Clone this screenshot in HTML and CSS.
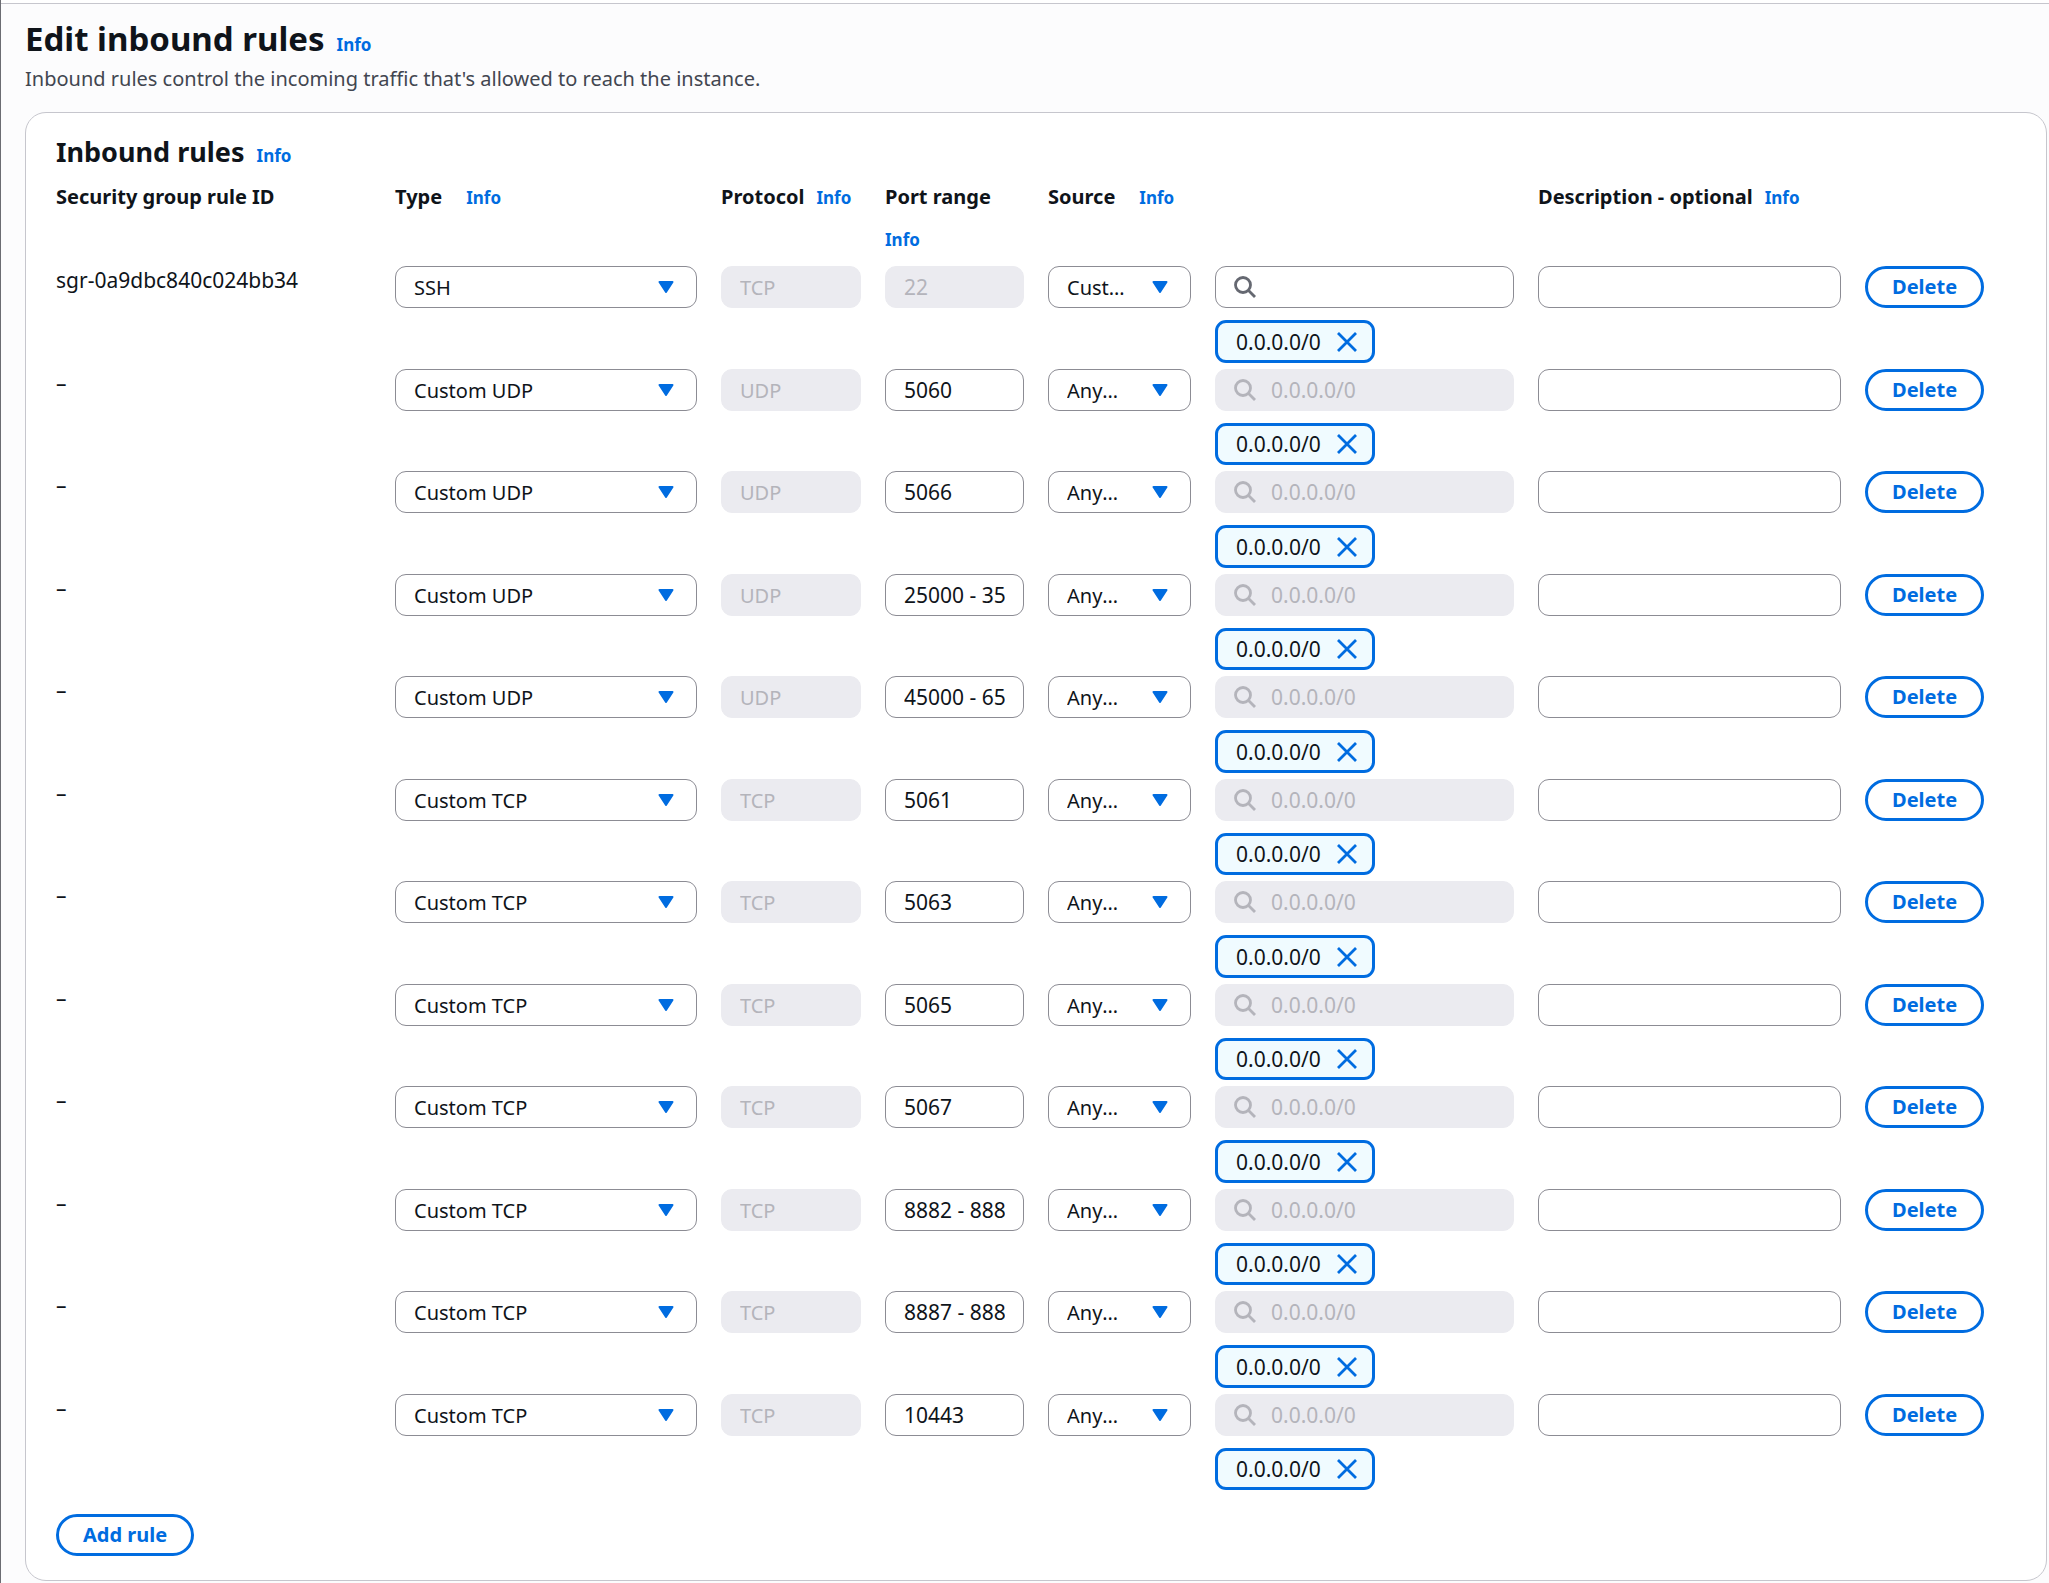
FILE: index.html
```html
<!DOCTYPE html>
<html lang="en">
<head>
<meta charset="utf-8">
<meta name="viewport" content="width=device-width, initial-scale=1">
<title>Edit inbound rules</title>
<link rel="stylesheet" href="styles.css">
</head>
<body>
<svg class="sprite" aria-hidden="true">
  <symbol id="caret" viewBox="0 0 16 12"><path d="M1.5 1h13L8 11z" fill="currentColor" stroke="currentColor" stroke-width="2" stroke-linejoin="round"/></symbol>
  <symbol id="search" viewBox="0 0 22 22"><g fill="none" stroke="currentColor" stroke-width="2.8"><circle cx="9" cy="9" r="7.5"/><path d="M14.3 14.3l6.7 6.7"/></g></symbol>
  <symbol id="close" viewBox="0 0 20 20"><path d="M1 1l18 18M19 1L1 19" fill="none" stroke="currentColor" stroke-width="2.8"/></symbol>
</svg>
<div class="topbar"></div>
<main class="page">
  <header class="page-header">
    <div class="title-row"><h1>Edit inbound rules</h1><a class="info" href="#info">Info</a></div>
    <p>Inbound rules control the incoming traffic that's allowed to reach the instance.</p>
  </header>
  <section class="card">
    <div class="title-row"><h2>Inbound rules</h2><a class="info" href="#info">Info</a></div>
    <table class="rules">
      <thead>
        <tr class="rule-grid">
          <th scope="col"><span>Security group rule ID</span></th>
          <th scope="col" class="wide"><span>Type</span><a class="info" href="#type">Info</a></th>
          <th scope="col"><span>Protocol</span><a class="info" href="#protocol">Info</a></th>
          <th scope="col"><span>Port range</span><a class="info" href="#port">Info</a></th>
          <th scope="col" class="wide"><span>Source</span><a class="info" href="#source">Info</a></th>
          <td></td>
          <th scope="col"><span>Description - optional</span><a class="info" href="#description">Info</a></th>
          <td></td>
        </tr>
      </thead>
      <tbody id="rules"></tbody>
    </table>
    <button class="btn" type="button">Add rule</button>
  </section>
</main>
<script src="rules.js"></script>
</body>
</html>
```
FILE: styles.css
```css
* { box-sizing: border-box; }

body {
  margin: 0;
  min-height: 100vh;
  border-left: 1px solid #6b6c72;
  background: #fcfcfd;
  color: #0f141a;
  font: 20px/28px "Noto Sans", "Open Sans", sans-serif;
}

h1, h2, p { margin: 0; }
h1 { font-size: 33px; line-height: 40px; }
h2 { font-size: 27px; line-height: 32px; }

.sprite { display: none; }

.topbar {
  height: 4px;
  border-bottom: 1px solid #c6c6cd;
  background: #fff;
}

.page { padding: 15px 2px 2px 24px; }
.page-header { margin-bottom: 19px; }
.page-header p { margin-top: 6px; color: #424650; }

.title-row {
  display: flex;
  align-items: baseline;
  gap: 12px;
}

.info {
  color: #006ce0;
  font-size: 17px;
  font-weight: 700;
  line-height: 20px;
  text-decoration: none;
}

.card {
  padding: 23px 30px 24px;
  border: 1px solid #c6c6cd;
  border-radius: 21px;
  background: #fff;
}

.rules {
  display: block;
  margin: 8px 0 18px;
}
.rules thead, .rules tbody { display: block; }

.rule-grid {
  display: grid;
  grid-template-columns:
    minmax(0, 315fr) minmax(0, 302fr) minmax(0, 140fr) minmax(0, 139fr)
    minmax(0, 143fr) minmax(0, 299fr) minmax(0, 303fr) minmax(0, 151fr);
  column-gap: 24px;
}

.rules th, .rules td { padding: 0; text-align: left; }
.rules th {
  display: flex;
  flex-wrap: wrap;
  align-content: flex-start;
  align-items: baseline;
  gap: 12px;
  line-height: 42px;
}
.rules th.wide { column-gap: 24px; }
.rules thead { padding-bottom: 16px; }
.rules tbody .rule-grid { padding-bottom: 6px; }

.rule-id, .port, .search input, .token { font-size: 21px; }

.field, .select select {
  display: block;
  width: 100%;
  height: 42px;
  padding: 0 18px;
  border: 1px solid #8c8c94;
  border-radius: 11px;
  background: #fff;
  color: #0f141a;
  font-family: inherit;
  font-size: 20px;
}
.field.port { font-size: 21px; }
.field:disabled {
  border-color: #ebebf0;
  background: #ebebf0;
  color: #b4b4bb;
}
.field::placeholder { color: #b4b4bb; }

.select, .search { display: grid; align-items: center; }
.select > *, .search > * { grid-area: 1 / 1; }
.select select {
  appearance: none;
  padding-right: 60px;
  overflow: hidden;
  text-overflow: ellipsis;
  white-space: nowrap;
}
.select svg {
  width: 16px;
  height: 12px;
  margin-right: 23px;
  justify-self: end;
  color: #006ce0;
  pointer-events: none;
}

.search input { padding-left: 55px; font-size: 21px; }
.search svg {
  z-index: 1;
  width: 22px;
  height: 22px;
  margin-left: 19px;
  color: #656871;
  pointer-events: none;
}
.search input:disabled + svg { color: #b4b4bb; }

.token {
  display: inline-flex;
  align-items: center;
  gap: 16px;
  height: 42px;
  margin-top: 12px;
  padding: 0 15px 0 18px;
  border: 3px solid #006ce0;
  border-radius: 11px;
  background: #f0fbff;
  vertical-align: top;
}
.rule-grid:nth-child(odd) .token { height: 43px; }
.token button {
  display: flex;
  padding: 0;
  border: 0;
  background: none;
  color: #006ce0;
}
.token svg { width: 20px; height: 20px; }

.btn {
  height: 42px;
  padding: 0 24px;
  border: 3px solid #006ce0;
  border-radius: 21px;
  background: #fff;
  color: #006ce0;
  font: 700 20px/28px "Noto Sans", "Open Sans", sans-serif;
}
```
FILE: rules.js
```js
const rules = [
  { id: 'sgr-0a9dbc840c024bb34', type: 'SSH', protocol: 'TCP', port: '22', source: 'Custom' },
  { type: 'Custom UDP', protocol: 'UDP', port: '5060' },
  { type: 'Custom UDP', protocol: 'UDP', port: '5066' },
  { type: 'Custom UDP', protocol: 'UDP', port: '25000 - 35000' },
  { type: 'Custom UDP', protocol: 'UDP', port: '45000 - 65000' },
  { type: 'Custom TCP', protocol: 'TCP', port: '5061' },
  { type: 'Custom TCP', protocol: 'TCP', port: '5063' },
  { type: 'Custom TCP', protocol: 'TCP', port: '5065' },
  { type: 'Custom TCP', protocol: 'TCP', port: '5067' },
  { type: 'Custom TCP', protocol: 'TCP', port: '8882 - 8883' },
  { type: 'Custom TCP', protocol: 'TCP', port: '8887 - 8888' },
  { type: 'Custom TCP', protocol: 'TCP', port: '10443' },
];

const select = (label, value) => `
  <div class="select">
    <select aria-label="${label}"><option>${value}</option></select>
    <svg aria-hidden="true"><use href="#caret"/></svg>
  </div>`;

const row = (rule) => {
  const custom = rule.source === 'Custom';
  return `
  <tr class="rule-grid">
    <td class="rule-id">${rule.id || '–'}</td>
    <td>${select('Type', rule.type)}</td>
    <td><input class="field" aria-label="Protocol" value="${rule.protocol}" disabled></td>
    <td><input class="field port" aria-label="Port range" value="${rule.port}" ${custom ? 'disabled' : ''}></td>
    <td>${select('Source', rule.source || 'Anywhere-IPv4')}</td>
    <td>
      <div class="search">
        <input class="field" aria-label="Source address" ${custom ? '' : 'placeholder="0.0.0.0/0" disabled'}>
        <svg aria-hidden="true"><use href="#search"/></svg>
      </div>
      <span class="token">0.0.0.0/0<button type="button" aria-label="Remove 0.0.0.0/0"><svg aria-hidden="true"><use href="#close"/></svg></button></span>
    </td>
    <td><input class="field" aria-label="Description"></td>
    <td><button class="btn" type="button">Delete</button></td>
  </tr>`;
};

document.getElementById('rules').innerHTML = rules.map(row).join('');
```
